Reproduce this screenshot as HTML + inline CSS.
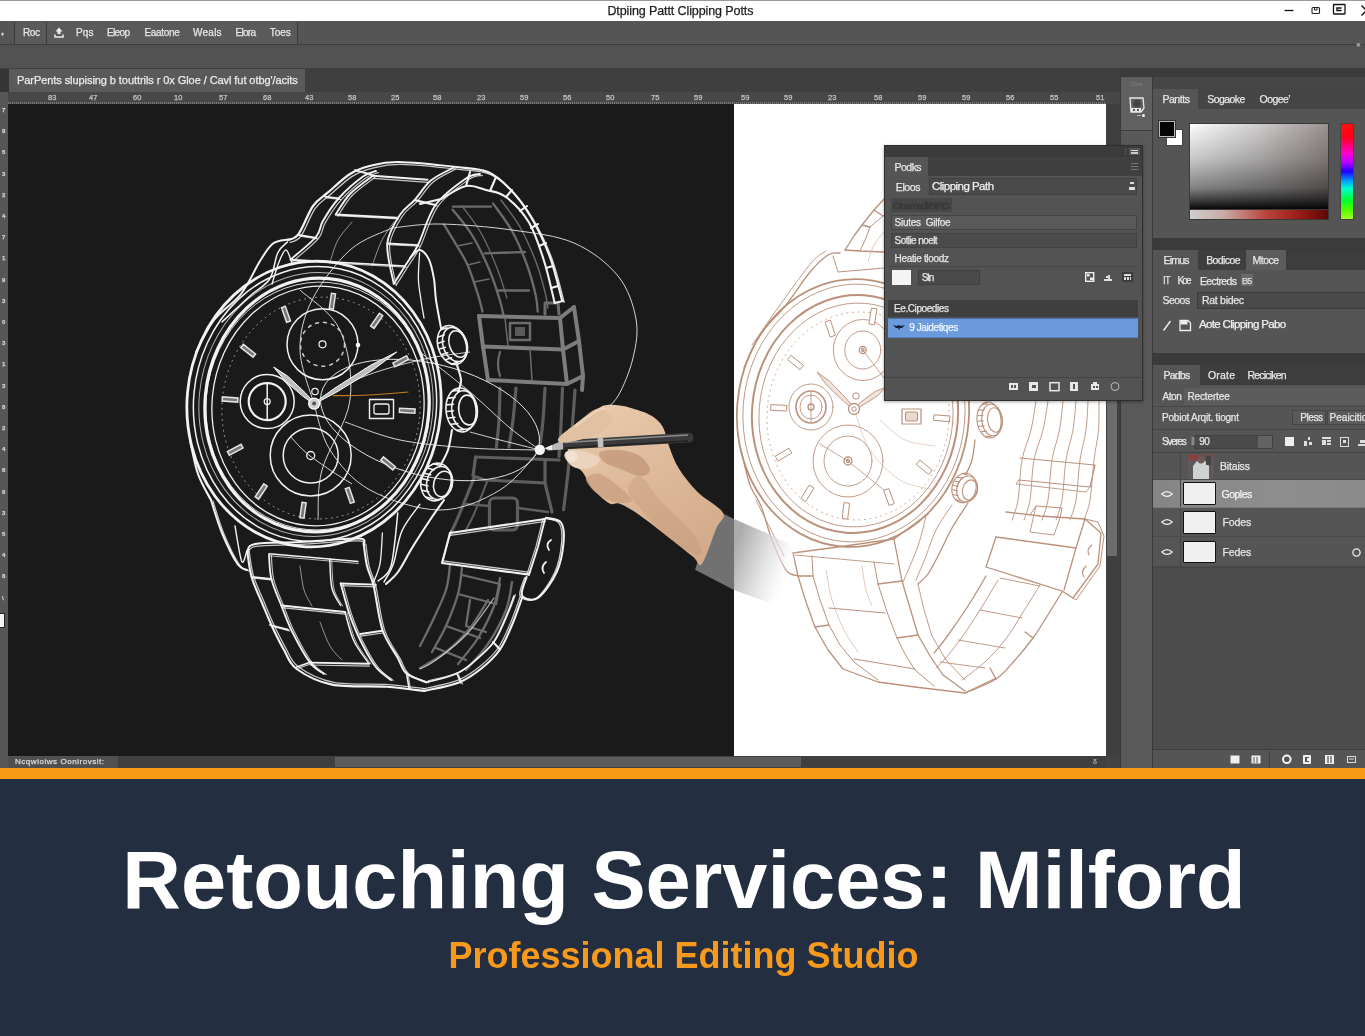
<!DOCTYPE html><html><head><meta charset="utf-8"><title>Retouching Services: Milford</title><style>
*{margin:0;padding:0;box-sizing:border-box}
html,body{width:1365px;height:1036px;overflow:hidden;background:#232e40}
body{font-family:"Liberation Sans",sans-serif;position:relative;will-change:transform}
.a{position:absolute}
.t{position:absolute;white-space:nowrap;color:#e6e6e6;font-size:10px;line-height:12px;letter-spacing:-0.2px;-webkit-text-stroke:0.25px currentColor}
#banner{position:absolute;left:0;top:779px;width:1365px;height:257px;background:#232e40}
#h1{position:absolute;left:0;width:1365px;text-align:center;top:830px;font-size:81.2px;line-height:100px;font-weight:bold;color:#fff;white-space:nowrap;padding-left:3px}
#h2{position:absolute;left:0;width:1365px;text-align:center;top:936.2px;font-size:36px;line-height:40px;font-weight:bold;color:#f7991c;white-space:nowrap;padding-left:2px}
</style></head><body>
<div class="a" style="left:0px;top:0px;width:1365px;height:21px;background:#fff;"></div>
<div class="a" style="left:0px;top:0px;width:1365px;height:1px;background:#9a9a9a;"></div>
<div class="t" style="left:607.4px;top:3.5px;font-size:12.5px;line-height:14.5px;letter-spacing:-0.10px;color:#1c1c1c">Dtpiing Pattt Clipping Potts</div>
<div class="a" style="left:0px;top:21px;width:1365px;height:24px;background:#555555;"></div>
<div class="a" style="left:14px;top:22px;width:284px;height:22px;background:#5a5a5a;border-left:1px solid #3a3a3a;border-right:1px solid #3a3a3a"></div>
<div class="a" style="left:46px;top:22px;width:1px;height:22px;background:#3a3a3a;"></div>
<div class="t" style="left:23px;top:27px;font-size:10px;line-height:12px;letter-spacing:-0.39px;">Roc</div>
<div class="t" style="left:76px;top:27px;font-size:10px;line-height:12px;letter-spacing:0.08px;">Pqs</div>
<div class="t" style="left:107px;top:27px;font-size:10px;line-height:12px;letter-spacing:-0.65px;">Eleop</div>
<div class="t" style="left:144.5px;top:27px;font-size:10px;line-height:12px;letter-spacing:-0.31px;">Eaatone</div>
<div class="t" style="left:193px;top:27px;font-size:10px;line-height:12px;letter-spacing:0.25px;">Weals</div>
<div class="t" style="left:235.4px;top:27px;font-size:10px;line-height:12px;letter-spacing:-0.66px;">Elora</div>
<div class="t" style="left:269.7px;top:27px;font-size:10px;line-height:12px;letter-spacing:-0.04px;">Toes</div>
<div class="a" style="left:0px;top:44px;width:1365px;height:1px;background:#3c3c3c;"></div>
<div class="a" style="left:0px;top:45px;width:1365px;height:23px;background:#525252;"></div>
<div class="a" style="left:0px;top:68px;width:1365px;height:24px;background:#3f3f3f;"></div>
<div class="a" style="left:9px;top:69px;width:296px;height:23px;background:#5a5a5a;"></div>
<div class="t" style="left:17px;top:74px;font-size:11px;line-height:13px;letter-spacing:-0.07px;color:#ececec">ParPents slupising b touttrils r 0x Gloe / Cavl fut otbg'/acits</div>
<div class="a" style="left:0px;top:92px;width:1120px;height:12px;background:#474747;"></div>
<div class="a" style="left:0px;top:92px;width:8px;height:676px;background:#565656;"></div>
<div class="a" style="left:8px;top:104px;width:726px;height:652px;background:#1a1a1a;"></div>
<div class="a" style="left:734px;top:104px;width:372px;height:652px;background:#fff;"></div>
<div class="a" style="left:1106px;top:104px;width:14px;height:664px;background:#434343;"></div>
<div class="a" style="left:8px;top:756px;width:1098px;height:12px;background:#404040;"></div>
<div class="a" style="left:8px;top:756px;width:110px;height:12px;background:#505050;"></div>
<div class="a" style="left:335px;top:757px;width:466px;height:10px;background:#5c5c5c;"></div>
<div class="t" style="left:48px;top:94px;font-size:7.5px;line-height:8px;color:#c4c4c4;letter-spacing:0">83</div>
<div class="t" style="left:89px;top:94px;font-size:7.5px;line-height:8px;color:#c4c4c4;letter-spacing:0">47</div>
<div class="t" style="left:133px;top:94px;font-size:7.5px;line-height:8px;color:#c4c4c4;letter-spacing:0">60</div>
<div class="t" style="left:174px;top:94px;font-size:7.5px;line-height:8px;color:#c4c4c4;letter-spacing:0">10</div>
<div class="t" style="left:219px;top:94px;font-size:7.5px;line-height:8px;color:#c4c4c4;letter-spacing:0">57</div>
<div class="t" style="left:263px;top:94px;font-size:7.5px;line-height:8px;color:#c4c4c4;letter-spacing:0">68</div>
<div class="t" style="left:305px;top:94px;font-size:7.5px;line-height:8px;color:#c4c4c4;letter-spacing:0">43</div>
<div class="t" style="left:348px;top:94px;font-size:7.5px;line-height:8px;color:#c4c4c4;letter-spacing:0">58</div>
<div class="t" style="left:391px;top:94px;font-size:7.5px;line-height:8px;color:#c4c4c4;letter-spacing:0">25</div>
<div class="t" style="left:433px;top:94px;font-size:7.5px;line-height:8px;color:#c4c4c4;letter-spacing:0">58</div>
<div class="t" style="left:477px;top:94px;font-size:7.5px;line-height:8px;color:#c4c4c4;letter-spacing:0">23</div>
<div class="t" style="left:520px;top:94px;font-size:7.5px;line-height:8px;color:#c4c4c4;letter-spacing:0">59</div>
<div class="t" style="left:563px;top:94px;font-size:7.5px;line-height:8px;color:#c4c4c4;letter-spacing:0">56</div>
<div class="t" style="left:606px;top:94px;font-size:7.5px;line-height:8px;color:#c4c4c4;letter-spacing:0">50</div>
<div class="t" style="left:651px;top:94px;font-size:7.5px;line-height:8px;color:#c4c4c4;letter-spacing:0">75</div>
<div class="t" style="left:694px;top:94px;font-size:7.5px;line-height:8px;color:#c4c4c4;letter-spacing:0">59</div>
<div class="t" style="left:741px;top:94px;font-size:7.5px;line-height:8px;color:#c4c4c4;letter-spacing:0">59</div>
<div class="t" style="left:784px;top:94px;font-size:7.5px;line-height:8px;color:#c4c4c4;letter-spacing:0">59</div>
<div class="t" style="left:828px;top:94px;font-size:7.5px;line-height:8px;color:#c4c4c4;letter-spacing:0">23</div>
<div class="t" style="left:874px;top:94px;font-size:7.5px;line-height:8px;color:#c4c4c4;letter-spacing:0">58</div>
<div class="t" style="left:918px;top:94px;font-size:7.5px;line-height:8px;color:#c4c4c4;letter-spacing:0">59</div>
<div class="t" style="left:962px;top:94px;font-size:7.5px;line-height:8px;color:#c4c4c4;letter-spacing:0">59</div>
<div class="t" style="left:1006px;top:94px;font-size:7.5px;line-height:8px;color:#c4c4c4;letter-spacing:0">56</div>
<div class="t" style="left:1050px;top:94px;font-size:7.5px;line-height:8px;color:#c4c4c4;letter-spacing:0">55</div>
<div class="t" style="left:1096px;top:94px;font-size:7.5px;line-height:8px;color:#c4c4c4;letter-spacing:0">51</div>
<div class="a" style="left:8px;top:102px;width:1098px;height:2px;background:repeating-linear-gradient(to right,#858585 0,#858585 1px,#474747 1px,#474747 2px);opacity:.8"></div>
<div class="t" style="left:2px;top:107.0px;font-size:6px;line-height:7px;color:#d0d0d0;font-weight:bold">7</div>
<div class="t" style="left:2px;top:128.2px;font-size:6px;line-height:7px;color:#d0d0d0;font-weight:bold">8</div>
<div class="t" style="left:2px;top:149.4px;font-size:6px;line-height:7px;color:#d0d0d0;font-weight:bold">5</div>
<div class="t" style="left:2px;top:170.6px;font-size:6px;line-height:7px;color:#d0d0d0;font-weight:bold">3</div>
<div class="t" style="left:2px;top:191.8px;font-size:6px;line-height:7px;color:#d0d0d0;font-weight:bold">2</div>
<div class="t" style="left:2px;top:213.0px;font-size:6px;line-height:7px;color:#d0d0d0;font-weight:bold">4</div>
<div class="t" style="left:2px;top:234.2px;font-size:6px;line-height:7px;color:#d0d0d0;font-weight:bold">7</div>
<div class="t" style="left:2px;top:255.4px;font-size:6px;line-height:7px;color:#d0d0d0;font-weight:bold">1</div>
<div class="t" style="left:2px;top:276.6px;font-size:6px;line-height:7px;color:#d0d0d0;font-weight:bold">9</div>
<div class="t" style="left:2px;top:297.79999999999995px;font-size:6px;line-height:7px;color:#d0d0d0;font-weight:bold">3</div>
<div class="t" style="left:2px;top:319.0px;font-size:6px;line-height:7px;color:#d0d0d0;font-weight:bold">0</div>
<div class="t" style="left:2px;top:340.2px;font-size:6px;line-height:7px;color:#d0d0d0;font-weight:bold">3</div>
<div class="t" style="left:2px;top:361.4px;font-size:6px;line-height:7px;color:#d0d0d0;font-weight:bold">1</div>
<div class="t" style="left:2px;top:382.59999999999997px;font-size:6px;line-height:7px;color:#d0d0d0;font-weight:bold">3</div>
<div class="t" style="left:2px;top:403.8px;font-size:6px;line-height:7px;color:#d0d0d0;font-weight:bold">8</div>
<div class="t" style="left:2px;top:425.0px;font-size:6px;line-height:7px;color:#d0d0d0;font-weight:bold">2</div>
<div class="t" style="left:2px;top:446.2px;font-size:6px;line-height:7px;color:#d0d0d0;font-weight:bold">4</div>
<div class="t" style="left:2px;top:467.4px;font-size:6px;line-height:7px;color:#d0d0d0;font-weight:bold">8</div>
<div class="t" style="left:2px;top:488.59999999999997px;font-size:6px;line-height:7px;color:#d0d0d0;font-weight:bold">6</div>
<div class="t" style="left:2px;top:509.8px;font-size:6px;line-height:7px;color:#d0d0d0;font-weight:bold">3</div>
<div class="t" style="left:2px;top:531.0px;font-size:6px;line-height:7px;color:#d0d0d0;font-weight:bold">5</div>
<div class="t" style="left:2px;top:552.2px;font-size:6px;line-height:7px;color:#d0d0d0;font-weight:bold">4</div>
<div class="t" style="left:2px;top:573.4px;font-size:6px;line-height:7px;color:#d0d0d0;font-weight:bold">8</div>
<div class="t" style="left:2px;top:594.5999999999999px;font-size:6px;line-height:7px;color:#d0d0d0;font-weight:bold">\</div>
<div class="a" style="left:0px;top:613px;width:5px;height:15px;background:#f4f4f4;border:1px solid #222;border-left:0"></div>
<div class="t" style="left:15px;top:757px;font-size:8px;line-height:10px;letter-spacing:0.54px;color:#dcdcdc">Ncqwioiws Oonirovsit:</div>
<div class="t" style="left:1093px;top:757px;font-size:7px;line-height:9px;color:#aaa">&#948;</div>
<svg class="a" style="left:1280px;top:2px" width="85" height="17" viewBox="0 0 85 17"><path d="M4.500 8.500h9" stroke="#111" stroke-width="1.300"/><rect x="32" y="5.500" width="7.500" height="6" rx="1" fill="none" stroke="#222" stroke-width="1.100"/><path d="M34.500 6v2h2.500v-2" fill="none" stroke="#222" stroke-width="1"/><rect x="53.500" y="2.500" width="11.500" height="9.500" rx="0.500" fill="none" stroke="#111" stroke-width="1.300"/><path d="M61.500 6h-4.500v2.500h4.500" fill="none" stroke="#111" stroke-width="1.400"/><path d="M81.500 3.500l5 5-5 5" fill="none" stroke="#111" stroke-width="1.400"/></svg>
<div class="t" style="left:1px;top:31px;font-size:6px;line-height:7px;color:#ccc">&#9830;</div>
<svg class="a" style="left:54px;top:27px" width="10" height="11" viewBox="0 0 10 11"><path d="M5 0.500L8.500 4.500H6.500V7H3.500V4.500H1.500Z" fill="#ececec"/><path d="M1 7.500V10H9V7.500" fill="none" stroke="#ececec" stroke-width="1.500"/></svg>
<div class="a" style="left:0px;top:69px;width:9px;height:23px;background:#353535;"></div>
<div class="a" style="left:1106px;top:104px;width:15px;height:652px;background:#3f3f3f;"></div>
<div class="a" style="left:1107px;top:395px;width:10px;height:161px;background:#6c6c6c;"></div>
<div class="a" style="left:1121px;top:68px;width:32px;height:700px;background:#595959;"></div>
<div class="a" style="left:1121px;top:78px;width:31px;height:52px;background:#606060;"></div>
<div class="a" style="left:1120px;top:68px;width:1px;height:700px;background:#3a3a3a;"></div>
<div class="a" style="left:1152px;top:77px;width:1px;height:691px;background:#3a3a3a;"></div>
<div class="a" style="left:1121px;top:130px;width:31px;height:1px;background:#3d3d3d;"></div>
<svg class="a" style="left:1127px;top:95px" width="22" height="24" viewBox="0 0 22 24"><path d="M3 3h13l1 10-3 4H4z" fill="none" stroke="#e8e8e8" stroke-width="1.300"/><circle cx="10" cy="8.500" r="3.800" fill="#444"/><rect x="4" y="13" width="10" height="4" fill="#e8e8e8"/><rect x="6" y="14" width="2" height="2" fill="#555"/><rect x="10" y="14" width="2" height="2" fill="#555"/><circle cx="16.500" cy="20.500" r="1.500" fill="#eee"/><path d="M10 20.500h4" stroke="#bbb" stroke-width="1"/></svg>
<div class="t" style="left:1131px;top:81px;font-size:6px;line-height:7px;color:#777">Cloe</div>
<div class="t" style="left:1146px;top:69px;font-size:9px;line-height:9px;color:#ddd;font-weight:bold">c</div>
<div class="t" style="left:1356px;top:41px;font-size:8px;line-height:8px;color:#999">&#9679;</div>
<div class="a" style="left:1153px;top:68px;width:212px;height:9px;background:#3b3b3b;"></div>
<div class="a" style="left:1121px;top:68px;width:244px;height:9px;background:#3b3b3b;"></div>
<div class="a" style="left:1153px;top:77px;width:212px;height:12px;background:#464646;"></div>
<div class="a" style="left:1153px;top:89px;width:212px;height:20px;background:#454545;"></div>
<div class="a" style="left:1153px;top:89px;width:45px;height:20px;background:#555;"></div>
<div class="t" style="left:1162.4px;top:93px;font-size:10.5px;line-height:12.5px;letter-spacing:-0.45px;">Pantts</div>
<div class="t" style="left:1207.3px;top:93px;font-size:10.5px;line-height:12.5px;letter-spacing:-0.58px;">Sogaoke</div>
<div class="t" style="left:1259.6px;top:93px;font-size:10.5px;line-height:12.5px;letter-spacing:-0.57px;">Oogee&#8217;</div>
<div class="a" style="left:1153px;top:109px;width:212px;height:129px;background:#555;"></div>
<div class="a" style="left:1166px;top:129px;width:17px;height:17px;background:#fff;border:1px solid #444"></div>
<div class="a" style="left:1159px;top:121px;width:16px;height:16px;background:#050505;border:1px solid #bbb;outline:1px solid #333"></div>
<div class="a" style="left:1189px;top:123px;width:140px;height:87px;background:linear-gradient(to bottom,rgba(0,0,0,0) 0%,rgba(0,0,0,.2) 40%,rgba(0,0,0,.48) 75%,rgba(0,0,0,.8) 92%,rgba(0,0,0,.97) 100%),linear-gradient(to right,#fdfdfd 0%,#cfcccc 50%,#9a9090 100%);border:1px solid #3a3a3a"></div>
<div class="a" style="left:1189px;top:210px;width:140px;height:10px;background:linear-gradient(to right,#cfcfcf 0%,#c9a9a4 25%,#b8453c 55%,#9a1a14 80%,#5e0805 100%);border:1px solid #3a3a3a;border-top:0"></div>
<div class="a" style="left:1340px;top:123px;width:14px;height:97px;background:linear-gradient(to bottom,#ff1010 0%,#ff0018 14%,#ff00c8 30%,#c000ff 40%,#2000ff 50%,#00a0ff 60%,#00ffd0 68%,#00ff30 80%,#50ff00 90%,#a0ff20 100%);border:1px solid #444"></div>
<div class="a" style="left:1153px;top:238px;width:212px;height:12px;background:#3b3b3b;"></div>
<div class="a" style="left:1153px;top:250px;width:212px;height:20px;background:#3d3d3d;"></div>
<div class="a" style="left:1153px;top:250px;width:45px;height:20px;background:#555;"></div>
<div class="t" style="left:1163.5px;top:254px;font-size:10.5px;line-height:12.5px;letter-spacing:-0.79px;">Eimus</div>
<div class="a" style="left:1199px;top:250px;width:46px;height:20px;background:#3f3f3f;"></div>
<div class="t" style="left:1206.2px;top:254px;font-size:10.5px;line-height:12.5px;letter-spacing:-0.61px;">Bodicoe</div>
<div class="a" style="left:1246px;top:250px;width:40px;height:20px;background:#5c5c5c;"></div>
<div class="t" style="left:1252.5px;top:254px;font-size:10.5px;line-height:12.5px;letter-spacing:-0.47px;">Mtoce</div>
<div class="a" style="left:1153px;top:270px;width:212px;height:83px;background:#555;"></div>
<div class="t" style="left:1163px;top:275px;font-size:10px;letter-spacing:-1px;color:#ddd">&#921;&#932;</div>
<div class="t" style="left:1177.6px;top:275px;font-size:10px;line-height:12px;letter-spacing:-1.90px;">Koe</div>
<div class="t" style="left:1200px;top:275px;font-size:10.5px;line-height:12.5px;letter-spacing:-0.63px;">Eectreds</div>
<div class="a" style="left:1241px;top:274px;width:12px;height:12px;background:#6a6a6a;"></div>
<div class="t" style="left:1242px;top:275px;font-size:9px;color:#ddd;letter-spacing:-0.8px">B5</div>
<div class="t" style="left:1162.4px;top:294px;font-size:10.5px;line-height:12.5px;letter-spacing:-0.49px;">Seoos</div>
<div class="a" style="left:1197px;top:292px;width:168px;height:17px;background:#4a4a4a;border:1px solid #3c3c3c;border-right:0"></div>
<div class="t" style="left:1202px;top:294px;font-size:10.5px;line-height:12.5px;letter-spacing:-0.29px;">Rat bidec</div>
<svg class="a" style="left:1162px;top:318px" width="30" height="14" viewBox="0 0 30 14"><path d="M1.5 12.5 L8.5 3" stroke="#f0f0f0" stroke-width="1.4" fill="none"/><path d="M18 2.5h8l2.5 2.5v7.5h-10.5z" fill="none" stroke="#eee" stroke-width="1.3"/><rect x="18.5" y="3" width="7" height="3.5" fill="#eee"/></svg>
<div class="t" style="left:1199px;top:318px;font-size:11.5px;line-height:13.5px;letter-spacing:-0.67px;color:#f0f0f0">Aote Clipping Pabo</div>
<div class="a" style="left:1153px;top:353px;width:212px;height:12px;background:#3b3b3b;"></div>
<div class="a" style="left:1153px;top:365px;width:212px;height:20px;background:#3d3d3d;"></div>
<div class="a" style="left:1153px;top:365px;width:47px;height:20px;background:#555;"></div>
<div class="t" style="left:1163.5px;top:369px;font-size:10.5px;line-height:12.5px;letter-spacing:-0.77px;">Padbs</div>
<div class="t" style="left:1208px;top:369px;font-size:10.5px;line-height:12.5px;letter-spacing:0.18px;">Orate</div>
<div class="t" style="left:1247.5px;top:369px;font-size:10.5px;line-height:12.5px;letter-spacing:-0.81px;">Reciciken</div>
<div class="a" style="left:1153px;top:385px;width:212px;height:68px;background:#555;"></div>
<div class="a" style="left:1184px;top:388px;width:181px;height:17px;background:#5c5c5c;"></div>
<div class="t" style="left:1162.4px;top:391px;font-size:10px;line-height:12px;letter-spacing:-0.36px;">Aton</div>
<div class="t" style="left:1187.4px;top:391px;font-size:10px;line-height:12px;letter-spacing:-0.12px;">Rectertee</div>
<div class="a" style="left:1153px;top:406px;width:212px;height:1px;background:#484848;"></div>
<div class="t" style="left:1162px;top:412px;font-size:10px;line-height:12px;letter-spacing:-0.22px;">Pobiot Arqit. tiognt</div>
<div class="a" style="left:1292px;top:410px;width:34px;height:15px;background:#5a5a5a;border:1px solid #444"></div>
<div class="t" style="left:1300.3px;top:412px;font-size:10px;line-height:12px;letter-spacing:-0.41px;">Pless</div>
<div class="a" style="left:1327px;top:410px;width:38px;height:15px;background:#5a5a5a;border:1px solid #444;border-right:0"></div>
<div class="t" style="left:1329.6px;top:412px;font-size:10px;line-height:12px;letter-spacing:-0.00px;">Peaicitidl</div>
<div class="a" style="left:1153px;top:429px;width:212px;height:1px;background:#464646;"></div>
<div class="t" style="left:1162px;top:436px;font-size:10px;line-height:12px;letter-spacing:-1.26px;">Sveres</div>
<div class="a" style="left:1194px;top:435px;width:79px;height:14px;background:#4a4a4a;border:1px solid #404040"></div>
<div class="a" style="left:1258px;top:436px;width:14px;height:12px;background:#636363;"></div>
<div class="t" style="left:1191px;top:436px;color:#999">&#8214;</div>
<div class="t" style="left:1199.3px;top:436px;font-size:10px;line-height:12px;letter-spacing:-0.72px;">90</div>
<div class="a" style="left:1285px;top:437px;width:9px;height:9px;background:#eee;"></div>
<svg class="a" style="left:1300px;top:435px" width="65" height="13" viewBox="0 0 65 13"><g fill="#ddd"><rect x="4" y="6" width="3" height="5"/><rect x="8" y="2" width="2" height="3"/><rect x="9" y="7" width="3" height="3"/><rect x="22" y="2" width="9" height="2"/><rect x="22" y="5" width="4" height="5"/><rect x="27" y="5" width="4" height="2"/><rect x="27" y="8" width="4" height="2"/></g><rect x="40.500" y="2.500" width="8" height="9" fill="none" stroke="#ddd"/><rect x="43" y="5" width="3" height="3" fill="#ddd"/><path d="M58 9h7v2h-7zM60 5h5v3h-5z" fill="#ddd"/></svg>
<div class="a" style="left:1153px;top:452px;width:212px;height:1px;background:#444;"></div>
<div class="a" style="left:1153px;top:453px;width:212px;height:27px;background:#555;"></div>
<div class="a" style="left:1180px;top:453px;width:1px;height:27px;background:#474747;"></div>
<div class="a" style="left:1153px;top:479px;width:212px;height:1px;background:#4a4a4a;"></div>
<div class="t" style="left:1219.9px;top:460px;font-size:10.5px;line-height:12.5px;letter-spacing:-0.15px;">Bitaiss</div>
<div class="a" style="left:1153px;top:480px;width:212px;height:28px;background:linear-gradient(to right,#858585,#8e8e8e 60%,#8a8a8a);"></div>
<div class="a" style="left:1180px;top:480px;width:1px;height:28px;background:#474747;"></div>
<div class="a" style="left:1153px;top:507px;width:212px;height:1px;background:#7a7a7a;"></div>
<svg class="a" style="left:1161px;top:490px" width="12" height="8" viewBox="0 0 15 10"><path d="M1 5 Q7.500 -1 14 5 Q7.500 11 1 5Z" fill="none" stroke="#f2f2f2" stroke-width="1.500"/></svg>
<div class="t" style="left:1221.5px;top:488px;font-size:10.5px;line-height:12.5px;letter-spacing:-0.51px;color:#f2f2f2">Goples</div>
<div class="a" style="left:1153px;top:508px;width:212px;height:29px;background:#555;"></div>
<div class="a" style="left:1180px;top:508px;width:1px;height:29px;background:#474747;"></div>
<div class="a" style="left:1153px;top:536px;width:212px;height:1px;background:#4a4a4a;"></div>
<svg class="a" style="left:1161px;top:518px" width="12" height="8" viewBox="0 0 15 10"><path d="M1 5 Q7.500 -1 14 5 Q7.500 11 1 5Z" fill="none" stroke="#f2f2f2" stroke-width="1.500"/></svg>
<div class="t" style="left:1222.4px;top:516px;font-size:10.5px;line-height:12.5px;letter-spacing:-0.05px;">Fodes</div>
<div class="a" style="left:1153px;top:537px;width:212px;height:30px;background:#555;"></div>
<div class="a" style="left:1180px;top:537px;width:1px;height:30px;background:#474747;"></div>
<div class="a" style="left:1153px;top:566px;width:212px;height:1px;background:#4a4a4a;"></div>
<svg class="a" style="left:1161px;top:548px" width="12" height="8" viewBox="0 0 15 10"><path d="M1 5 Q7.500 -1 14 5 Q7.500 11 1 5Z" fill="none" stroke="#f2f2f2" stroke-width="1.500"/></svg>
<div class="t" style="left:1222.4px;top:546px;font-size:10.5px;line-height:12.5px;letter-spacing:-0.05px;">Fedes</div>
<svg class="a" style="left:1188px;top:454px" width="26" height="25" viewBox="0 0 26 25"><rect width="26" height="25" fill="#5e5a5a"/><rect x="0" y="0" width="26" height="7" fill="#6e5050"/><rect x="2" y="1" width="7" height="5" fill="#8a4040"/><path d="M5 25V12l4-5h8l4 5v13z" fill="#cfd2d2"/><circle cx="13" cy="6" r="3.500" fill="#6a5a55"/><rect x="18" y="2" width="5" height="9" fill="#444"/></svg>
<div class="a" style="left:1183px;top:482px;width:33px;height:23px;background:#f0f0f0;border:1.500px solid #111;border-radius:1px"></div>
<div class="a" style="left:1183px;top:511px;width:33px;height:23px;background:#f0f0f0;border:1.500px solid #111;border-radius:1px"></div>
<div class="a" style="left:1183px;top:541px;width:33px;height:22px;background:#f0f0f0;border:1.500px solid #111;border-radius:1px"></div>
<svg class="a" style="left:1351px;top:547px" width="11" height="11"><circle cx="5.500" cy="5.500" r="3.600" fill="none" stroke="#eee" stroke-width="1.300"/></svg>
<div class="a" style="left:1153px;top:567px;width:212px;height:183px;background:#4c4c4c;"></div>
<div class="a" style="left:1153px;top:567px;width:212px;height:1px;background:#454545;"></div>
<div class="a" style="left:1153px;top:750px;width:212px;height:18px;background:#555;"></div>
<div class="a" style="left:1153px;top:749px;width:212px;height:1px;background:#3f3f3f;"></div>
<div class="a" style="left:1269px;top:751px;width:1px;height:17px;background:#3f3f3f;"></div>
<svg class="a" style="left:1228px;top:753px" width="137" height="13" viewBox="0 0 137 13"><rect x="2.500" y="2.500" width="9" height="8" fill="#eee"/><rect x="23.500" y="2.500" width="9" height="8" fill="#eee"/><path d="M26 4v6M29 4v6" stroke="#555" stroke-width="1"/><circle cx="58.800" cy="6.300" r="3.800" fill="none" stroke="#f4f4f4" stroke-width="2"/><path d="M76 3h6v7h-6z" fill="none" stroke="#f4f4f4" stroke-width="2" stroke-linejoin="round"/><rect x="79" y="5" width="3" height="3" fill="#f4f4f4"/><rect x="97" y="2" width="9" height="9" fill="#eee"/><path d="M100 3v7M103 3v7" stroke="#555" stroke-width="1.200"/><rect x="119.500" y="3.500" width="8" height="6" fill="none" stroke="#ddd" stroke-width="1"/><rect x="121" y="5" width="5" height="2" fill="#999"/></svg>
<svg class="a" style="left:8px;top:104px" width="1098" height="652" viewBox="8 104 1098 652">
<g fill="none" stroke="#bb917b" stroke-width="1.300" stroke-linejoin="round" stroke-linecap="round">
<ellipse cx="853" cy="413" rx="116" ry="134" transform="rotate(4.5 853 413)" stroke-width="1.800"/>
<ellipse cx="854" cy="413" rx="111" ry="129" transform="rotate(4.5 854 413)" stroke-width="0.900"/>
<ellipse cx="855" cy="414" rx="103" ry="119" transform="rotate(4.5 855 414)" stroke-width="2"/>
<ellipse cx="856" cy="415" rx="97" ry="112" transform="rotate(4.5 856 415)" stroke-width="0.900"/>
<ellipse cx="858" cy="416" rx="91" ry="104" transform="rotate(4.5 858 416)" stroke-width="0.800" stroke-dasharray="1 4.500" stroke="#bb917b"/>
<path d="M744.0 368.0 C746.7 362.5 753.0 345.5 760.0 335.0 C767.0 324.5 777.7 315.5 786.0 305.0 C794.3 294.5 803.0 280.3 810.0 272.0 C817.0 263.7 823.0 258.2 828.0 255.0 C833.0 251.8 838.0 253.3 840.0 253.0"/>
<path d="M752.0 345.0 C757.5 337.2 775.0 311.8 785.0 298.0 C795.0 284.2 805.2 269.8 812.0 262.0 C818.8 254.2 823.7 252.8 826.0 251.0" stroke-width="0.900"/>
<path d="M741.0 450.0 C742.5 455.8 746.7 475.7 750.0 485.0 C753.3 494.3 757.3 496.8 761.0 506.0 C764.7 515.2 767.8 529.3 772.0 540.0 C776.2 550.7 781.7 564.0 786.0 570.0 C790.3 576.0 796.0 575.0 798.0 576.0"/>
<path d="M756.0 500.0 C758.3 504.7 765.3 518.7 770.0 528.0 C774.7 537.3 781.7 551.3 784.0 556.0" stroke-width="0.900"/>
<path d="M845.0 250.0 L854.0 236.0 L862.0 225.0 L874.0 210.0 L885.0 198.0 L900.0 188.0"/>
<path d="M860.0 251.0 L866.0 238.0 L870.0 227.0 L883.0 216.0 L900.0 205.0" stroke-width="1"/>
<path d="M845.0 250.0 L860.0 251.0 L884.0 252.0"/><path d="M862.0 225.0 L870.0 227.0"/><path d="M874.0 210.0 L883.0 216.0"/>
<path d="M833.0 256.0 L838.0 272.0 L884.0 268.0" stroke-width="1"/>
<path d="M868.0 262.0 C869.0 259.2 871.3 250.0 874.0 245.0 C876.7 240.0 882.3 234.2 884.0 232.0" stroke-width="0.700" stroke="#d2b3a4"/>
<path d="M975.0 440.0 C974.5 443.3 973.5 454.3 972.0 460.0 C970.5 465.7 967.0 471.7 966.0 474.0"/>
<path d="M968.0 503.0 C965.3 507.2 956.7 519.8 952.0 528.0 C947.3 536.2 944.0 544.3 940.0 552.0 C936.0 559.7 931.7 568.7 928.0 574.0 C924.3 579.3 919.7 582.3 918.0 584.0"/>
<path d="M952.0 505.0 C949.3 509.2 940.3 521.5 936.0 530.0 C931.7 538.5 929.3 547.7 926.0 556.0 C922.7 564.3 917.7 576.0 916.0 580.0" stroke-width="0.900"/>
<path d="M926.0 516.0 C924.7 521.0 921.8 535.0 918.0 546.0 C914.2 557.0 905.5 576.0 903.0 582.0" stroke-width="0.900"/>
<g stroke-width="1.100">
<ellipse cx="989" cy="420" rx="12" ry="18" transform="rotate(-6 989 420)" /><ellipse cx="995" cy="420" rx="7.4399999999999995" ry="12.24" transform="rotate(-6 995 420)" /><ellipse cx="992.0" cy="420.0" rx="10.2" ry="15.84" transform="rotate(-6 992.0 420.0)" /><path d="M982.4 404.4L987.7 403.8"/><path d="M978.8 410.2L984.2 409.6"/><path d="M977.6 415.8L983.0 415.2"/><path d="M977.7 421.2L983.0 420.6"/><path d="M978.7 426.5L984.1 425.9"/><path d="M981.1 431.7L986.4 431.1"/><path d="M985.8 436.6L991.1 436.1"/>
<ellipse cx="964" cy="488" rx="12" ry="15" transform="rotate(14 964 488)" /><ellipse cx="970" cy="490" rx="7.4399999999999995" ry="10.200000000000001" transform="rotate(14 970 490)" /><ellipse cx="967.0" cy="489.0" rx="10.2" ry="13.2" transform="rotate(14 967.0 489.0)" /><path d="M962.4 473.7L967.7 475.0"/><path d="M957.3 477.1L962.6 478.4"/><path d="M954.5 481.0L959.8 482.3"/><path d="M952.9 485.2L958.2 486.5"/><path d="M952.4 489.7L957.6 491.0"/><path d="M953.0 494.5L958.2 495.8"/><path d="M955.9 499.9L961.2 501.2"/>
</g>
<path d="M793.0 553.0 L798.0 576.0 L806.0 602.0 L815.0 627.0 L828.0 650.0 L843.0 669.0 L878.0 682.0 L915.0 687.0 L965.0 693.0 L996.0 678.0"/>
<path d="M793.0 553.0 L845.0 546.0 L894.0 539.0 L928.0 514.0"/>
<path d="M795.0 555.0 L894.0 564.0" stroke-width="0.900"/>
<path d="M894.0 539.0 L898.0 560.0 L902.0 581.0 L910.0 608.0 L918.0 635.0 L930.0 656.0 L943.0 675.0 L965.0 691.0"/>
<path d="M874.0 562.0 L878.0 584.0 L887.0 612.0 L897.0 638.0 L906.0 656.0 L915.0 670.0 L934.0 686.0" stroke-width="1"/>
<path d="M812.0 556.0 L813.0 576.0 L820.0 600.0 L829.0 625.0 L840.0 645.0 L854.0 662.0 L878.0 680.0" stroke-width="1"/>
<path d="M829.0 608.0 L885.0 613.0" stroke-width="1"/><path d="M854.0 659.0 L915.0 669.0" stroke-width="1"/>
<path d="M798.0 576.0 L813.0 576.0"/><path d="M815.0 627.0 L829.0 625.0"/><path d="M878.0 584.0 L902.0 581.0"/><path d="M897.0 638.0 L918.0 635.0"/>
<path d="M918.0 584.0 L924.0 610.0 L932.0 636.0 L946.0 660.0 L965.0 680.0" stroke-width="0.900"/>
<path d="M826.0 570.0 C827.0 575.0 829.0 590.0 832.0 600.0 C835.0 610.0 839.7 621.3 844.0 630.0 C848.3 638.7 855.7 648.3 858.0 652.0" stroke-width="0.700" stroke="#d2b3a4"/>
<path d="M862.0 566.0 C862.7 570.0 864.3 583.3 866.0 590.0 C867.7 596.7 871.0 603.3 872.0 606.0" stroke-width="0.700" stroke="#d2b3a4"/>
<path d="M1036.0 401.0 C1035.2 405.8 1033.3 420.2 1031.0 430.0 C1028.7 439.8 1024.2 448.3 1022.0 460.0 C1019.8 471.7 1019.7 490.0 1018.0 500.0 C1016.3 510.0 1013.0 516.7 1012.0 520.0" stroke-width="0.900"/>
<path d="M1048.0 401.0 C1047.2 405.8 1045.3 420.2 1043.0 430.0 C1040.7 439.8 1036.2 448.3 1034.0 460.0 C1031.8 471.7 1031.7 490.0 1030.0 500.0 C1028.3 510.0 1025.0 516.7 1024.0 520.0" stroke-width="0.900"/>
<path d="M1063.0 401.0 C1062.4 405.8 1061.3 420.2 1059.5 430.0 C1057.7 439.8 1053.9 448.3 1052.0 460.0 C1050.1 471.7 1049.7 490.0 1048.0 500.0 C1046.3 510.0 1043.0 516.7 1042.0 520.0" stroke-width="0.900"/>
<path d="M1076.0 401.0 C1075.5 405.8 1074.7 420.2 1073.0 430.0 C1071.3 439.8 1067.8 448.3 1066.0 460.0 C1064.2 471.7 1063.7 490.0 1062.0 500.0 C1060.3 510.0 1057.0 516.7 1056.0 520.0" stroke-width="0.900"/>
<path d="M1088.0 401.0 C1087.7 405.8 1087.3 420.2 1086.0 430.0 C1084.7 439.8 1081.7 448.3 1080.0 460.0 C1078.3 471.7 1077.7 490.0 1076.0 500.0 C1074.3 510.0 1071.0 516.7 1070.0 520.0" stroke-width="0.900"/>
<path d="M1099.0 401.0 C1098.9 405.8 1099.3 420.2 1098.5 430.0 C1097.7 439.8 1095.4 448.3 1094.0 460.0 C1092.6 471.7 1091.7 490.0 1090.0 500.0 C1088.3 510.0 1085.0 516.7 1084.0 520.0" stroke-width="0.900"/>
<path d="M1020.0 458.0 L1095.0 465.0 L1090.0 487.0 L1019.0 480.0" stroke-width="1.200"/>
<path d="M1019.0 480.0 L1016.0 484.0 L1086.0 492.0 L1090.0 487.0" stroke-width="0.900"/>
<path d="M1006.0 512.0 L1040.0 516.0 L1085.0 519.0 L1101.0 533.0 L1098.0 564.0 L1073.0 598.0 L1062.0 591.0 L986.0 567.0 L996.0 537.0"/>
<path d="M996.0 537.0 L1076.0 548.0 L1085.0 519.0"/><path d="M1076.0 548.0 L1064.0 590.0"/>
<path d="M1030.0 515.0 L1036.0 506.0 L1062.0 508.0 L1060.0 518.0" stroke-width="1"/><path d="M1036.0 506.0 L1030.0 532.0 L1054.0 535.0 L1060.0 518.0" stroke-width="0.900"/>
<path d="M1092 545 q-6 4 -3 10 M1086 566 q-6 6 -2 11" stroke-width="1.100"/>
<path d="M1085.0 519.0 L1098.0 522.0 L1104.0 536.0 L1100.0 566.0 L1076.0 600.0 L1073.0 598.0" stroke-width="1"/>
<path d="M1062.0 592.0 C1059.3 596.3 1050.8 610.3 1046.0 618.0 C1041.2 625.7 1038.2 631.0 1033.0 638.0 C1027.8 645.0 1021.2 653.2 1015.0 660.0 C1008.8 666.8 1004.3 673.5 996.0 679.0 C987.7 684.5 970.2 690.7 965.0 693.0"/>
<path d="M1040.0 585.0 C1037.0 589.8 1027.8 604.8 1022.0 614.0 C1016.2 623.2 1011.2 632.0 1005.0 640.0 C998.8 648.0 992.2 655.3 985.0 662.0 C977.8 668.7 965.8 677.0 962.0 680.0" stroke-width="0.900"/>
<path d="M986.0 576.0 C983.0 581.0 974.7 595.7 968.0 606.0 C961.3 616.3 951.7 630.2 946.0 638.0 C940.3 645.8 936.0 650.5 934.0 653.0"/>
<path d="M998.0 580.0 C995.0 585.0 986.3 600.0 980.0 610.0 C973.7 620.0 966.0 631.7 960.0 640.0 C954.0 648.3 948.0 655.3 944.0 660.0 C940.0 664.7 937.3 666.7 936.0 668.0" stroke-width="0.900"/>
<path d="M1000.0 578.0 L1040.0 586.0" stroke-width="0.900"/><path d="M980.0 610.0 L1022.0 618.0" stroke-width="0.900"/><path d="M958.0 640.0 L1005.0 648.0" stroke-width="0.900"/><path d="M940.0 662.0 L985.0 668.0" stroke-width="0.900"/>
<path d="M1033.0 638.0 L1025.0 632.0"/><path d="M996.0 679.0 L990.0 668.0"/>
<g stroke-width="0.900">
<ellipse cx="862.8" cy="350" rx="29.5" ry="30.5" transform="rotate(0 862.8 350)" />
<ellipse cx="862.8" cy="350" rx="18" ry="19" transform="rotate(0 862.8 350)" />
<ellipse cx="811" cy="407" rx="22" ry="23" transform="rotate(0 811 407)" />
<ellipse cx="811" cy="407" rx="15" ry="16" transform="rotate(0 811 407)" stroke-width="1.600"/>
<ellipse cx="811" cy="407" rx="11" ry="12" transform="rotate(0 811 407)" />
<ellipse cx="848" cy="461" rx="35" ry="36" transform="rotate(0 848 461)" />
<ellipse cx="848" cy="461" rx="24" ry="25" transform="rotate(0 848 461)" />
<path d="M811 392v30"/>
</g>
<circle cx="862.800" cy="350" r="3.500"/><circle cx="862.800" cy="350" r="1.300"/><circle cx="811" cy="407" r="3"/><circle cx="848" cy="461" r="4"/><circle cx="848" cy="461" r="1.500"/>
<path d="M848.0 461.0 L884.0 490.0" stroke-width="0.800"/><path d="M848.0 461.0 L820.0 444.0" stroke-width="0.800"/><path d="M862.8 350.0 L884.0 378.0" stroke-width="0.800"/>
<rect x="902" y="409" width="19" height="15" stroke-width="1.200"/><rect x="905.500" y="412" width="12" height="9" rx="1.500" stroke-width="1.100" fill="#e9d9d0"/>
<path d="M854.0 409.0 C856.7 415.8 862.3 438.2 870.0 450.0 C877.7 461.8 889.2 473.3 900.0 480.0 C910.8 486.7 929.2 488.3 935.0 490.0" stroke-width="0.600" stroke="#d2b3a4"/>
<path d="M880.0 420.0 C884.2 423.3 895.8 435.7 905.0 440.0 C914.2 444.3 930.0 445.0 935.0 446.0" stroke-width="0.600" stroke="#d2b3a4"/>
</g>
<g stroke="#bb917b" stroke-width="1" fill="#fff">
<path d="M874.4 324.8 L877.0 309.0 L871.4 308.1 L868.9 323.9Z"/>
<path d="M911.3 342.7 L920.6 329.8 L916.1 326.5 L906.7 339.5Z"/>
<path d="M929.9 378.3 L944.2 371.1 L941.6 366.1 L927.4 373.3Z"/>
<path d="M933.6 420.4 L949.5 421.6 L949.9 416.0 L934.0 414.8Z"/>
<path d="M916.2 464.3 L928.5 474.5 L932.1 470.2 L919.8 460.0Z"/>
<path d="M883.6 490.5 L889.1 505.5 L894.3 503.5 L888.8 488.5Z"/>
<path d="M844.0 502.6 L842.2 518.5 L847.7 519.1 L849.6 503.2Z"/>
<path d="M809.2 485.1 L800.8 498.7 L805.6 501.7 L814.0 488.0Z"/>
<path d="M789.0 448.2 L775.2 456.2 L778.0 461.0 L791.8 453.0Z"/>
<path d="M786.9 405.4 L770.9 404.6 L770.6 410.2 L786.6 411.0Z"/>
<path d="M803.5 365.3 L790.9 355.4 L787.5 359.7 L800.0 369.7Z"/>
<path d="M835.4 335.3 L830.4 320.1 L825.1 321.9 L830.1 337.1Z"/>
</g>
<path d="M858.2 413.2L846.1 398.4L829.8 381.4L817.0 372.0L826.4 384.8L843.4 401.1Z" fill="#efe3dc" stroke="#bb917b" stroke-width="0.900"/>
<path d="M850.7 411.3L863.1 405.1L877.8 395.6L886.0 387.0L875.0 391.6L860.9 401.9Z" fill="#efe3dc" stroke="#bb917b" stroke-width="0.900"/>
<circle cx="854" cy="409" r="5.500" fill="#fff" stroke="#bb917b" stroke-width="1.300"/><circle cx="854" cy="409" r="2.200" fill="none" stroke="#bb917b" stroke-width="1"/>
<circle cx="856" cy="396" r="3.200" fill="none" stroke="#bb917b" stroke-width="1"/>
<g fill="none" stroke="#6c6c6c" stroke-width="2.3" stroke-linejoin="round" stroke-linecap="round">
<path d="M444.0 224.6 C446.2 228.2 453.1 239.3 457.0 246.0 C460.9 252.7 464.1 256.9 467.6 265.0 C471.1 273.1 475.5 286.9 478.0 294.7 C480.5 302.5 481.8 308.9 482.5 311.7"/>
<path d="M452.7 209.7 C455.9 213.9 465.9 225.1 472.0 235.0 C478.1 244.9 484.4 258.3 489.0 269.0 C493.6 279.7 497.1 291.2 499.5 299.0 C501.9 306.8 503.0 313.2 503.7 316.0"/>
<path d="M493.0 203.4 C496.2 208.0 506.3 220.7 512.0 231.0 C517.7 241.3 523.1 254.4 527.0 265.0 C530.9 275.6 533.8 286.9 535.6 294.7 C537.4 302.5 537.4 308.9 537.7 311.7"/>
<path d="M501.0 200.0 C504.2 204.5 514.2 216.7 520.0 227.0 C525.8 237.3 531.8 251.2 536.0 262.0 C540.2 272.8 543.0 284.3 545.0 292.0 C547.0 299.7 547.5 305.3 548.0 308.0" stroke-width="1.4"/>
<path d="M462.0 206.0 C465.2 210.5 475.2 222.7 481.0 233.0 C486.8 243.3 492.7 257.2 497.0 268.0 C501.3 278.8 505.3 293.0 507.0 298.0" stroke-width="1.3"/>
<path d="M452.700 206.600L491 206.600"/><path d="M484.600 253.300L525 252"/><path d="M498.400 290.500L529 290.500"/>
<path d="M457 246L472 243M467.600 265L480 262M474 282L489 279" stroke-width="1.600"/>
<g stroke="#7d7d7d" stroke-width="4" stroke-linejoin="round">
<path d="M479 316L560 318L574 307"/>
<path d="M483 346.500L563 349.500L579 341"/>
<path d="M488 380L567 384L583 376"/>
<path d="M479 316L483 346.500L488 380"/>
<path d="M560 318L563 349.500L567 384"/>
<path d="M574 307L579 341L583 376L582 390"/>
</g>
<path d="M510 323h20v17h-20z" stroke-width="2.500"/><rect x="515" y="327" width="10" height="9" fill="#5a5a5a" stroke="none"/>
<path d="M500 352q-4 12 0 24" stroke-width="2.200"/><path d="M545 314L545 303L558 303L559 314" stroke-width="3"/>
<path d="M505 318L508 346M530 349L532 380" stroke-width="1.500"/>
<g stroke="#5e5e5e" stroke-width="3.200">
<path d="M500.0 388.0 C499.8 393.3 499.6 410.2 499.0 420.0 C498.4 429.8 496.8 442.5 496.4 447.0"/>
<path d="M516.0 388.0 C515.5 393.3 514.2 410.2 513.0 420.0 C511.8 429.8 509.7 442.5 509.0 447.0"/>
<path d="M545.0 388.0 C544.7 393.3 543.8 410.9 543.0 420.0 C542.2 429.1 540.9 438.8 540.5 442.5"/>
<path d="M562.5 388.0 C562.2 394.2 561.6 413.6 561.0 425.0 C560.4 436.4 559.3 451.2 559.0 456.4"/>
<path d="M575.0 390.0 C574.5 396.7 573.2 416.2 572.0 430.0 C570.8 443.8 569.4 459.4 568.0 472.7 C566.6 486.0 564.3 503.5 563.6 509.7"/>
<path d="M475.600 457L559 460"/>
<path d="M475.6 457.0 L473.0 476.0 L485.0 480.0 L545.0 483.0"/>
<path d="M545.0 460.0 L545.0 483.0 L552.0 512.0"/>
<path d="M474.0 478.0 C471.6 484.0 463.4 504.5 459.4 514.0 C455.4 523.5 451.6 531.5 450.0 535.0"/>
<path d="M487.0 482.0 C484.8 487.3 477.5 506.0 474.0 514.0 C470.5 522.0 467.3 527.3 466.0 530.0" stroke-width="2"/>
<rect x="489.500" y="498" width="28" height="32" rx="5"/>
<path d="M518 508L548 512" stroke-width="2.400"/><path d="M466 504L489 506" stroke-width="2.400"/>
</g>
<path d="M450.0 565.0 C449.3 569.2 449.0 580.5 446.0 590.0 C443.0 599.5 436.3 612.7 432.0 622.0 C427.7 631.3 422.0 642.0 420.0 646.0"/>
<path d="M462.0 568.0 C461.3 572.3 460.7 584.3 458.0 594.0 C455.3 603.7 450.3 616.3 446.0 626.0 C441.7 635.7 434.3 647.7 432.0 652.0"/>
<path d="M500.0 578.0 C499.0 582.7 497.7 596.0 494.0 606.0 C490.3 616.0 484.0 628.3 478.0 638.0 C472.0 647.7 461.3 659.7 458.0 664.0"/>
<path d="M512.0 582.0 C511.0 586.7 510.0 599.7 506.0 610.0 C502.0 620.3 494.7 634.0 488.0 644.0 C481.3 654.0 469.7 665.7 466.0 670.0"/>
<path d="M458 594 L496 604"/><path d="M446 626 L480 638"/><path d="M436 648 L466 660"/>
<path d="M462 575 L500 584 L496 604"/><path d="M470 600 L466 626 L486 632"/>
<path d="M420.0 668.0 C424.3 665.3 437.7 658.7 446.0 652.0 C454.3 645.3 463.0 636.7 470.0 628.0 C477.0 619.3 485.0 604.7 488.0 600.0"/>
</g>
<g fill="none" stroke="#e6e6e6" stroke-width="0.9">
<path d="M392.0 228.0 C400.0 227.3 420.0 223.7 440.0 224.0 C460.0 224.3 489.7 226.8 512.0 230.0 C534.3 233.2 556.3 235.3 574.0 243.0 C591.7 250.7 607.7 263.3 618.0 276.0 C628.3 288.7 633.5 305.3 636.0 319.0 C638.5 332.7 636.0 345.2 633.0 358.0 C630.0 370.8 623.5 386.7 618.0 396.0 C612.5 405.3 603.0 411.0 600.0 414.0"/>
<path d="M392.0 228.0 C385.0 231.7 363.3 238.0 350.0 250.0 C336.7 262.0 320.3 283.3 312.0 300.0 C303.7 316.7 299.7 332.7 300.0 350.0 C300.3 367.3 311.7 395.0 314.0 404.0"/>
<ellipse cx="430" cy="420" rx="112" ry="56" transform="rotate(14 430 420)" />
<path d="M314.0 404.0 C321.7 399.7 342.3 385.3 360.0 378.0 C377.7 370.7 401.7 364.3 420.0 360.0 C438.3 355.7 461.7 353.3 470.0 352.0"/>
<path d="M420.0 352.0 C428.3 358.7 455.0 379.3 470.0 392.0 C485.0 404.7 498.3 418.3 510.0 428.0 C521.7 437.7 535.0 446.3 540.0 450.0"/>
<path d="M314.0 404.0 C316.7 411.7 320.7 435.7 330.0 450.0 C339.3 464.3 351.7 480.0 370.0 490.0 C388.3 500.0 418.3 510.0 440.0 510.0 C461.7 510.0 483.3 500.0 500.0 490.0 C516.7 480.0 533.3 456.7 540.0 450.0"/>
<path d="M300.0 290.0 C306.7 296.7 331.7 311.7 340.0 330.0 C348.3 348.3 353.0 376.7 350.0 400.0 C347.0 423.3 327.3 450.0 322.0 470.0 C316.7 490.0 318.7 511.7 318.0 520.0"/>
<path d="M345.0 422.0 C354.2 425.0 379.2 435.7 400.0 440.0 C420.8 444.3 446.7 446.3 470.0 448.0 C493.3 449.7 528.3 449.7 540.0 450.0"/>
<path d="M470.0 432.0 C475.0 433.3 488.3 437.0 500.0 440.0 C511.7 443.0 533.3 448.3 540.0 450.0"/>
<ellipse cx="318" cy="406" rx="112" ry="124" transform="rotate(5 318 406)" />
<path d="M310.0 456.0 C313.3 458.3 323.0 465.3 330.0 470.0 C337.0 474.7 348.3 481.7 352.0 484.0"/>
<path d="M290.0 436.0 C291.7 437.8 296.7 443.7 300.0 447.0 C303.3 450.3 308.3 454.5 310.0 456.0"/>
</g>
<g fill="none" stroke="#f2f2f2" stroke-width="2.1" stroke-linejoin="round" stroke-linecap="round">
<ellipse cx="314" cy="404" rx="127" ry="143" transform="rotate(5.4 314 404)" stroke-width="2.8"/>
<ellipse cx="315" cy="404" rx="121.5" ry="137.5" transform="rotate(5.4 315 404)" stroke-width="1.5"/>
<ellipse cx="316" cy="404.5" rx="117" ry="132" transform="rotate(5.4 316 404.5)" stroke-width="1" opacity="0.7"/>
<ellipse cx="317" cy="405" rx="112" ry="127" transform="rotate(5.4 317 405)" stroke-width="3.2"/>
<ellipse cx="318" cy="406" rx="106" ry="120" transform="rotate(5.4 318 406)" stroke-width="1.3"/>
<ellipse cx="321" cy="408" rx="99" ry="111" transform="rotate(5.4 321 408)" stroke-width="0.8" stroke-dasharray="1 4.5" stroke="#bbb"/>
<path d="M196.0 352.0 C199.0 346.7 206.5 329.7 214.0 320.0 C221.5 310.3 233.3 303.8 241.0 294.0 C248.7 284.2 254.7 269.4 260.0 261.0 C265.3 252.6 268.3 247.1 273.0 243.5 C277.7 239.9 285.5 240.2 288.0 239.5" stroke-width="2"/>
<path d="M222.0 322.0 C226.7 317.7 242.1 303.2 250.0 296.0 C257.9 288.8 265.1 286.2 269.7 279.0 C274.3 271.8 274.8 259.2 277.7 253.0 C280.6 246.8 285.8 243.8 287.4 242.0" stroke-width="1.5"/>
<path d="M272.0 284.0 C273.2 280.3 276.7 267.7 279.0 262.0 C281.3 256.3 283.8 249.8 286.0 250.0 C288.2 250.2 291.0 260.8 292.0 263.0" stroke-width="1.4"/>
<path d="M190.0 440.0 C191.3 445.7 194.5 464.0 198.0 474.0 C201.5 484.0 208.8 495.7 211.0 500.0"/>
<path d="M410.0 258.0 C411.6 256.7 416.4 249.7 419.6 250.0 C422.8 250.3 426.6 254.8 429.0 259.6 C431.4 264.4 432.8 272.3 434.0 279.0 C435.2 285.7 434.8 291.8 436.0 300.0 C437.2 308.2 440.2 323.3 441.0 328.0" stroke-width="2"/>
<path d="M419.6 253.0 C419.4 257.3 418.2 271.2 418.4 279.0 C418.6 286.8 420.1 293.5 421.0 300.0 C421.9 306.5 423.5 315.0 424.0 318.0" stroke-width="1.3"/>
<path d="M456.0 362.0 C456.8 365.0 460.7 375.0 461.0 380.0 C461.3 385.0 458.5 390.0 458.0 392.0"/>
<path d="M452.0 430.0 C451.3 433.3 450.0 444.0 448.0 450.0 C446.0 456.0 441.3 463.3 440.0 466.0"/>
<path d="M444.0 500.0 C441.7 503.3 435.3 512.0 430.0 520.0 C424.7 528.0 417.3 539.3 412.0 548.0 C406.7 556.7 402.3 566.0 398.0 572.0 C393.7 578.0 388.0 582.0 386.0 584.0"/>
<path d="M419.8 504.4 C416.8 508.8 406.4 520.9 402.0 530.8 C397.6 540.7 396.4 555.2 393.4 563.7 C390.4 572.2 385.6 579.0 384.0 582.0" stroke-width="1.5"/>
<path d="M397.8 513.0 C396.7 521.8 394.3 554.7 391.0 566.0 C387.7 577.3 380.2 578.5 378.0 581.0" stroke-width="1.5"/>
<path d="M382.4 533.0 C382.0 538.1 381.5 555.5 380.0 563.7 C378.5 571.9 374.7 579.0 373.6 582.0" stroke-width="1.3"/>
<g stroke-width="1.6">
<ellipse cx="452" cy="345" rx="14" ry="20" transform="rotate(-18 452 345)" /><ellipse cx="458" cy="344" rx="8.68" ry="13.600000000000001" transform="rotate(-18 458 344)" /><ellipse cx="455.0" cy="344.5" rx="11.9" ry="17.6" transform="rotate(-18 455.0 344.5)" /><path d="M440.9 329.7L446.9 327.7"/><path d="M438.2 336.9L444.2 334.9"/><path d="M438.1 343.2L444.1 341.3"/><path d="M439.4 349.1L445.3 347.2"/><path d="M441.8 354.6L447.8 352.7"/><path d="M445.6 359.7L451.6 357.8"/><path d="M452.0 363.9L458.0 362.0"/>
<ellipse cx="461" cy="410" rx="15" ry="22" transform="rotate(-6 461 410)" /><ellipse cx="468" cy="410" rx="9.3" ry="14.96" transform="rotate(-6 468 410)" /><ellipse cx="464.5" cy="410.0" rx="12.75" ry="19.36" transform="rotate(-6 464.5 410.0)" /><path d="M452.8 391.0L459.5 390.3"/><path d="M448.3 398.1L455.0 397.4"/><path d="M446.8 404.9L453.5 404.2"/><path d="M446.8 411.5L453.5 410.8"/><path d="M448.2 418.0L454.9 417.3"/><path d="M451.0 424.3L457.8 423.6"/><path d="M456.9 430.3L463.6 429.6"/>
<ellipse cx="436" cy="482" rx="15" ry="19" transform="rotate(14 436 482)" /><ellipse cx="443" cy="484" rx="9.3" ry="12.920000000000002" transform="rotate(14 443 484)" /><ellipse cx="439.5" cy="483.0" rx="12.75" ry="16.72" transform="rotate(14 439.5 483.0)" /><path d="M434.1 463.9L440.7 465.5"/><path d="M427.7 468.2L434.2 469.8"/><path d="M424.2 473.2L430.7 474.8"/><path d="M422.2 478.6L428.7 480.2"/><path d="M421.4 484.2L428.0 485.9"/><path d="M422.2 490.3L428.7 491.9"/><path d="M425.8 497.1L432.4 498.7"/>
</g>
<path d="M288.0 240.0 C289.8 239.0 294.5 239.5 298.7 233.8 C302.9 228.1 308.2 212.8 313.0 206.0 C317.8 199.2 321.5 198.0 327.7 192.7 C333.9 187.4 343.0 178.4 350.0 174.0 C357.0 169.6 361.5 168.0 369.6 166.0 C377.7 164.0 384.1 161.8 398.6 162.0 C413.1 162.2 441.7 165.3 456.6 167.0 C471.5 168.7 479.1 168.3 488.0 172.0 C496.9 175.7 502.8 181.5 510.0 189.0 C517.2 196.5 524.3 205.7 531.0 217.0 C537.7 228.3 544.8 243.2 550.0 257.0 C555.2 270.8 560.0 292.8 562.0 300.0" stroke-width="2.2"/>
<path d="M288.0 240.0 C289.8 239.0 294.5 239.5 298.7 233.8 C302.9 228.1 308.2 212.8 313.0 206.0 C317.8 199.2 321.5 198.0 327.7 192.7 C333.9 187.4 343.0 178.4 350.0 174.0 C357.0 169.6 361.5 168.0 369.6 166.0 C377.7 164.0 384.1 161.8 398.6 162.0 C413.1 162.2 441.7 165.3 456.6 167.0 C471.5 168.7 479.1 168.3 488.0 172.0 C496.9 175.7 502.8 181.5 510.0 189.0 C517.2 196.5 524.3 205.7 531.0 217.0 C537.7 228.3 544.8 243.2 550.0 257.0 C555.2 270.8 560.0 292.8 562.0 300.0" stroke-width="1.36" opacity="0.8" transform="translate(2.2 2.4)"/>
<path d="M290.6 259.6 C294.8 255.8 310.6 243.4 316.0 237.0 C321.4 230.6 319.1 227.5 322.9 221.0 C326.7 214.5 332.3 205.4 339.0 198.0 C345.7 190.6 356.8 181.1 363.0 176.6 C369.2 172.1 373.8 171.9 376.0 171.0" stroke-width="1.9"/>
<path d="M290.6 259.6 C294.8 255.8 310.6 243.4 316.0 237.0 C321.4 230.6 319.1 227.5 322.9 221.0 C326.7 214.5 332.3 205.4 339.0 198.0 C345.7 190.6 356.8 181.1 363.0 176.6 C369.2 172.1 373.8 171.9 376.0 171.0" stroke-width="1.18" opacity="0.8" transform="translate(2.4 1.6)"/>
<path d="M298.7 235.0 L316.4 237.8" stroke-width="1.8"/>
<path d="M298.7 235.0 L316.4 237.8" stroke-width="1.12" opacity="0.8" transform="translate(1.6 1.2)"/>
<path d="M325.0 196.7 L339.0 198.3" stroke-width="1.8"/>
<path d="M325.0 196.7 L339.0 198.3" stroke-width="1.12" opacity="0.8" transform="translate(1.6 1.2)"/>
<path d="M355.0 170.0 L372.0 174.5" stroke-width="1.8"/>
<path d="M355.0 170.0 L372.0 174.5" stroke-width="1.12" opacity="0.8" transform="translate(1.6 1.2)"/>
<path d="M335.7 214.5 C338.1 211.1 343.8 200.4 350.0 194.0 C356.2 187.6 369.0 178.8 372.8 175.8" stroke-width="1.8"/>
<path d="M335.7 214.5 C338.1 211.1 343.8 200.4 350.0 194.0 C356.2 187.6 369.0 178.8 372.8 175.8" stroke-width="1.12" opacity="0.8" transform="translate(2.2 1.5)"/>
<path d="M372.8 175.8 L427.6 179.8" stroke-width="1.9"/>
<path d="M372.8 175.8 L427.6 179.8" stroke-width="1.18" opacity="0.8" transform="translate(0.5 2.6)"/>
<path d="M335.7 214.5 L397.0 217.7" stroke-width="1.9"/>
<path d="M335.7 214.5 L397.0 217.7" stroke-width="1.18" opacity="0.8" transform="translate(1.6 1.2)"/>
<path d="M290.6 259.6 L405.0 266.0" stroke-width="1.7"/>
<path d="M290.6 259.6 L405.0 266.0" stroke-width="1.05" opacity="0.8" transform="translate(1.6 1.2)"/>
<path d="M393.8 283.8 C392.7 277.1 386.2 255.1 387.3 243.5 C388.4 231.9 395.6 221.8 400.2 214.5 C404.8 207.2 409.6 205.7 414.7 200.0 C419.8 194.3 424.4 186.0 430.8 180.6 C437.2 175.2 449.6 169.8 453.4 167.7" stroke-width="1.9"/>
<path d="M393.8 283.8 C392.7 277.1 386.2 255.1 387.3 243.5 C388.4 231.9 395.6 221.8 400.2 214.5 C404.8 207.2 409.6 205.7 414.7 200.0 C419.8 194.3 424.4 186.0 430.8 180.6 C437.2 175.2 449.6 169.8 453.4 167.7" stroke-width="1.18" opacity="0.8" transform="translate(2.4 1.4)"/>
<path d="M393.8 283.8 C395.7 280.8 401.0 272.5 405.0 266.0 C409.0 259.5 412.9 255.2 418.0 245.0 C423.1 234.8 427.6 215.9 435.7 204.8 C443.8 193.7 458.9 183.3 466.3 178.2 C473.7 173.1 477.7 174.7 480.0 174.0" stroke-width="1.9"/>
<path d="M393.8 283.8 C395.7 280.8 401.0 272.5 405.0 266.0 C409.0 259.5 412.9 255.2 418.0 245.0 C423.1 234.8 427.6 215.9 435.7 204.8 C443.8 193.7 458.9 183.3 466.3 178.2 C473.7 173.1 477.7 174.7 480.0 174.0" stroke-width="1.18" opacity="0.8" transform="translate(2.4 1.4)"/>
<path d="M387.3 243.5 L418.0 245.1" stroke-width="1.8"/>
<path d="M387.3 243.5 L418.0 245.1" stroke-width="1.12" opacity="0.8" transform="translate(1.6 1.2)"/>
<path d="M414.7 200.0 L435.7 204.8" stroke-width="1.8"/>
<path d="M414.7 200.0 L435.7 204.8" stroke-width="1.12" opacity="0.8" transform="translate(1.6 1.2)"/>
<path d="M330.0 262.0 C331.3 258.3 334.3 246.7 338.0 240.0 C341.7 233.3 349.7 225.0 352.0 222.0" stroke-width="0.8" opacity="0.7"/>
<path d="M372.0 266.0 C373.7 261.7 378.3 247.3 382.0 240.0 C385.7 232.7 392.0 225.0 394.0 222.0" stroke-width="0.8" opacity="0.7"/>
<path d="M441.0 199.0 C445.2 196.8 458.5 187.5 466.0 186.0 C473.5 184.5 479.3 188.2 486.0 190.0 C492.7 191.8 498.8 191.6 506.0 197.0 C513.2 202.4 522.7 211.9 529.0 222.5 C535.3 233.1 539.7 247.3 544.0 260.7 C548.3 274.1 552.9 295.9 554.7 303.0"/>
<path d="M466.0 186.0 L470.0 172.0"/><path d="M490.0 191.0 L496.0 177.0"/><path d="M506.0 197.0 L512.0 190.0"/><path d="M520.0 211.0 L527.0 206.0"/><path d="M531.0 228.0 L538.0 224.0"/><path d="M539.0 246.0 L546.0 243.0"/><path d="M546.0 268.0 L553.0 266.0"/><path d="M551.0 288.0 L558.0 286.0"/><path d="M554.7 303.0 L563.0 301.0"/>
<path d="M420.0 204.0 L441.0 199.0"/>
<path d="M211.0 500.0 C212.8 505.5 217.6 522.4 222.0 533.0 C226.4 543.6 233.2 557.5 237.4 563.7 C241.6 569.9 245.4 569.0 247.0 570.0" stroke-width="2.0"/>
<path d="M211.0 500.0 C212.8 505.5 217.6 522.4 222.0 533.0 C226.4 543.6 233.2 557.5 237.4 563.7 C241.6 569.9 245.4 569.0 247.0 570.0" stroke-width="1.24" opacity="0.8" transform="translate(2 1)"/>
<path d="M235.0 526.0 C236.1 531.9 239.8 557.4 241.8 561.5 C243.8 565.6 246.1 552.3 247.0 550.5" stroke-width="1.4"/>
<path d="M247.3 551.6 C248.6 550.3 246.2 545.6 255.0 544.0 C263.8 542.4 282.8 542.9 300.0 542.0 C317.2 541.1 347.4 538.2 358.0 538.5 C368.6 538.8 362.8 543.1 363.7 544.0" stroke-width="2.0"/>
<path d="M247.3 551.6 C248.6 550.3 246.2 545.6 255.0 544.0 C263.8 542.4 282.8 542.9 300.0 542.0 C317.2 541.1 347.4 538.2 358.0 538.5 C368.6 538.8 362.8 543.1 363.7 544.0" stroke-width="1.24" opacity="0.8" transform="translate(0.5 2.4)"/>
<path d="M269.0 553.8 L358.0 561.5" stroke-width="1.5"/>
<path d="M269.0 553.8 L358.0 561.5" stroke-width="0.93" opacity="0.8" transform="translate(0.4 2)"/>
<path d="M247.3 551.6 C248.0 555.8 249.2 568.4 251.6 577.0 C254.0 585.6 258.5 594.6 262.0 603.0 C265.5 611.4 268.8 619.7 272.5 627.5 C276.2 635.3 280.0 643.1 284.0 650.0 C288.0 656.9 288.7 663.2 296.7 669.0 C304.7 674.8 317.0 681.6 332.0 684.6 C347.0 687.6 371.5 685.7 386.8 686.8 C402.1 687.9 417.8 690.3 424.0 691.0" stroke-width="2.1"/>
<path d="M247.3 551.6 C248.0 555.8 249.2 568.4 251.6 577.0 C254.0 585.6 258.5 594.6 262.0 603.0 C265.5 611.4 268.8 619.7 272.5 627.5 C276.2 635.3 280.0 643.1 284.0 650.0 C288.0 656.9 288.7 663.2 296.7 669.0 C304.7 674.8 317.0 681.6 332.0 684.6 C347.0 687.6 371.5 685.7 386.8 686.8 C402.1 687.9 417.8 690.3 424.0 691.0" stroke-width="1.30" opacity="0.8" transform="translate(1.6 -2.2)"/>
<path d="M269.0 555.0 C269.4 559.0 269.3 570.6 271.4 579.0 C273.4 587.4 277.8 596.7 281.3 605.5 C284.8 614.3 287.5 622.5 292.3 632.0 C297.1 641.5 304.7 655.6 310.0 662.6 C315.3 669.6 321.7 672.1 324.0 674.0" stroke-width="1.8"/>
<path d="M269.0 555.0 C269.4 559.0 269.3 570.6 271.4 579.0 C273.4 587.4 277.8 596.7 281.3 605.5 C284.8 614.3 287.5 622.5 292.3 632.0 C297.1 641.5 304.7 655.6 310.0 662.6 C315.3 669.6 321.7 672.1 324.0 674.0" stroke-width="1.12" opacity="0.8" transform="translate(2.4 0.6)"/>
<path d="M251.6 577.0 L271.4 579.0" stroke-width="1.8"/>
<path d="M251.6 577.0 L271.4 579.0" stroke-width="1.12" opacity="0.8" transform="translate(1.6 1.2)"/>
<path d="M270.0 625.0 L288.0 629.7" stroke-width="1.8"/>
<path d="M270.0 625.0 L288.0 629.7" stroke-width="1.12" opacity="0.8" transform="translate(1.6 1.2)"/>
<path d="M296.7 667.0 L311.0 662.0" stroke-width="1.8"/>
<path d="M296.7 667.0 L311.0 662.0" stroke-width="1.12" opacity="0.8" transform="translate(1.6 1.2)"/>
<path d="M329.7 559.0 C330.1 563.8 330.1 580.2 331.9 588.0 C333.7 595.8 339.2 602.6 340.7 605.5" stroke-width="1.5"/>
<path d="M329.7 559.0 C330.1 563.8 330.1 580.2 331.9 588.0 C333.7 595.8 339.2 602.6 340.7 605.5" stroke-width="0.93" opacity="0.8" transform="translate(2 0.5)"/>
<path d="M281.3 605.5 L345.0 612.0" stroke-width="1.9"/>
<path d="M281.3 605.5 L345.0 612.0" stroke-width="1.18" opacity="0.8" transform="translate(0.4 2.2)"/>
<path d="M345.0 612.0 C346.5 616.8 349.8 632.1 353.8 640.7 C357.8 649.3 366.5 659.9 369.0 663.7" stroke-width="1.5"/>
<path d="M345.0 612.0 C346.5 616.8 349.8 632.1 353.8 640.7 C357.8 649.3 366.5 659.9 369.0 663.7" stroke-width="0.93" opacity="0.8" transform="translate(2 0.5)"/>
<path d="M310.0 662.6 L369.0 663.7" stroke-width="1.9"/>
<path d="M310.0 662.6 L369.0 663.7" stroke-width="1.18" opacity="0.8" transform="translate(0.4 2.4)"/>
<path d="M340.7 583.5 C342.2 588.6 346.2 604.8 349.5 614.3 C352.8 623.8 356.0 631.9 360.4 640.7 C364.8 649.5 370.7 660.5 375.8 667.0 C380.9 673.5 388.5 677.8 391.0 680.0" stroke-width="1.9"/>
<path d="M340.7 583.5 C342.2 588.6 346.2 604.8 349.5 614.3 C352.8 623.8 356.0 631.9 360.4 640.7 C364.8 649.5 370.7 660.5 375.8 667.0 C380.9 673.5 388.5 677.8 391.0 680.0" stroke-width="1.18" opacity="0.8" transform="translate(2.2 0.4)"/>
<path d="M363.7 544.0 C364.2 547.7 365.4 559.0 367.0 566.0 C368.6 573.0 371.0 575.1 373.6 585.7 C376.2 596.3 378.4 617.7 382.4 629.7 C386.4 641.8 393.8 650.7 397.8 658.0 C401.8 665.3 401.8 669.5 406.6 673.6 C411.4 677.7 423.1 680.9 426.4 682.4" stroke-width="2.0"/>
<path d="M363.7 544.0 C364.2 547.7 365.4 559.0 367.0 566.0 C368.6 573.0 371.0 575.1 373.6 585.7 C376.2 596.3 378.4 617.7 382.4 629.7 C386.4 641.8 393.8 650.7 397.8 658.0 C401.8 665.3 401.8 669.5 406.6 673.6 C411.4 677.7 423.1 680.9 426.4 682.4" stroke-width="1.24" opacity="0.8" transform="translate(2.2 0.4)"/>
<path d="M340.7 583.5 L375.8 584.6" stroke-width="1.9"/>
<path d="M340.7 583.5 L375.8 584.6" stroke-width="1.18" opacity="0.8" transform="translate(0.3 2.2)"/>
<path d="M360.4 634.0 L382.4 630.8" stroke-width="1.9"/>
<path d="M360.4 634.0 L382.4 630.8" stroke-width="1.18" opacity="0.8" transform="translate(0.3 2.2)"/>
<path d="M406.6 673.6 L409.0 688.0" stroke-width="1.6"/>
<path d="M406.6 673.6 L409.0 688.0" stroke-width="0.99" opacity="0.8" transform="translate(1.6 1.2)"/>
<path d="M457.0 673.6 L461.0 683.0" stroke-width="1.6"/>
<path d="M457.0 673.6 L461.0 683.0" stroke-width="0.99" opacity="0.8" transform="translate(1.6 1.2)"/>
<path d="M426.4 682.4 C431.5 680.9 448.4 677.7 457.0 673.6 C465.6 669.5 471.8 663.5 478.0 658.0 C484.2 652.5 489.5 648.4 494.5 640.7 C499.5 633.0 504.8 619.5 508.0 612.0 C511.2 604.5 513.0 598.7 514.0 596.0" stroke-width="1.7"/>
<path d="M426.4 682.4 C431.5 680.9 448.4 677.7 457.0 673.6 C465.6 669.5 471.8 663.5 478.0 658.0 C484.2 652.5 489.5 648.4 494.5 640.7 C499.5 633.0 504.8 619.5 508.0 612.0 C511.2 604.5 513.0 598.7 514.0 596.0" stroke-width="1.05" opacity="0.8" transform="translate(1.5 -1.5)"/>
<path d="M300.0 566.0 C300.7 570.0 302.0 583.3 304.0 590.0 C306.0 596.7 310.7 603.3 312.0 606.0" stroke-width="0.8" opacity="0.7"/>
<path d="M320.0 622.0 C321.7 626.0 326.3 639.7 330.0 646.0 C333.7 652.3 340.0 657.7 342.0 660.0" stroke-width="0.8" opacity="0.7"/>
<path d="M450.0 533.0 L545.0 519.0" stroke-width="2.1"/>
<path d="M450.0 533.0 L545.0 519.0" stroke-width="1.30" opacity="0.8" transform="translate(0.4 2.4)"/>
<path d="M450.0 533.0 L442.0 563.0 L529.0 574.6" stroke-width="2.1"/>
<path d="M450.0 533.0 L442.0 563.0 L529.0 574.6" stroke-width="1.30" opacity="0.8" transform="translate(1 -2.2)"/>
<path d="M545.0 519.0 L538.0 546.8 L529.0 574.6" stroke-width="1.9"/>
<path d="M545.0 519.0 L538.0 546.8 L529.0 574.6" stroke-width="1.18" opacity="0.8" transform="translate(-2 -0.4)"/>
<path d="M546.0 517.8 C548.5 518.6 558.1 518.5 561.0 522.5 C563.9 526.5 564.3 533.8 563.6 542.0 C562.9 550.2 561.0 562.7 556.7 572.0 C552.4 581.3 543.8 593.9 538.0 597.8 C532.2 601.7 523.9 598.9 522.0 595.4 C520.1 591.9 525.8 580.1 526.6 577.0" stroke-width="2.1"/>
<path d="M546.0 517.8 C548.5 518.6 558.1 518.5 561.0 522.5 C563.9 526.5 564.3 533.8 563.6 542.0 C562.9 550.2 561.0 562.7 556.7 572.0 C552.4 581.3 543.8 593.9 538.0 597.8 C532.2 601.7 523.9 598.9 522.0 595.4 C520.1 591.9 525.8 580.1 526.6 577.0" stroke-width="1.30" opacity="0.8" transform="translate(-2 0.6)"/>
<path d="M551 540q-6 4 -2 10M546 562q-6 5 -2 11" stroke-width="1.800"/>
<path d="M522.0 598.0 C520.3 602.5 515.7 616.4 512.0 625.0 C508.3 633.6 505.0 642.3 500.0 649.5 C495.0 656.7 488.8 662.5 482.0 668.0 C475.2 673.5 468.7 678.6 459.0 682.4 C449.3 686.2 429.8 689.6 424.0 691.0" stroke-width="2.1"/>
<path d="M522.0 598.0 C520.3 602.5 515.7 616.4 512.0 625.0 C508.3 633.6 505.0 642.3 500.0 649.5 C495.0 656.7 488.8 662.5 482.0 668.0 C475.2 673.5 468.7 678.6 459.0 682.4 C449.3 686.2 429.8 689.6 424.0 691.0" stroke-width="1.30" opacity="0.8" transform="translate(-1.5 -2)"/>
<path d="M494.0 598.0 C489.3 604.2 475.7 624.7 466.0 635.0 C456.3 645.3 443.7 654.3 436.0 660.0 C428.3 665.7 422.7 667.5 420.0 669.0" stroke-width="1.2" opacity="0.7"/>
<path d="M500.0 649.5 L493.0 642.0"/>
<g stroke-width="1.5">
<ellipse cx="322.5" cy="344.3" rx="35.5" ry="35.5" transform="rotate(0 322.5 344.3)" />
<ellipse cx="322.5" cy="344.3" rx="22" ry="22" transform="rotate(0 322.5 344.3)" stroke-dasharray="3 5" stroke="#ccc"/>
<ellipse cx="267.2" cy="401.6" rx="27" ry="27" transform="rotate(0 267.2 401.6)" />
<ellipse cx="267.2" cy="401.6" rx="18.5" ry="18.5" transform="rotate(0 267.2 401.6)" stroke-width="2.2"/>
<ellipse cx="310.7" cy="455.5" rx="40.5" ry="40.5" transform="rotate(0 310.7 455.5)" />
<ellipse cx="310.7" cy="455.5" rx="27.5" ry="27.5" transform="rotate(0 310.7 455.5)" />
<path d="M267.2 384v35"/>
</g>
<circle cx="322.500" cy="344.300" r="3.500" stroke-width="1.200"/><circle cx="267.200" cy="401.600" r="3" stroke-width="1.200"/><circle cx="310.700" cy="455.500" r="4" stroke-width="1.300"/>
<circle cx="358" cy="345" r="2.300" fill="#fff" stroke="none"/>
<rect x="369.500" y="399.500" width="24" height="19" stroke-width="1.400"/><rect x="374" y="404" width="15" height="10" rx="2" stroke-width="1.300"/>
</g>
<g stroke="#e4e4e4" stroke-width="5.600" stroke-linecap="butt" fill="none">
<path d="M331.2 309.7L333.6 292.9"/>
<path d="M371.9 327.8L381.5 313.8"/>
<path d="M393.2 365.2L408.2 357.2"/>
<path d="M398.7 410.3L415.7 411.1"/>
<path d="M381.5 458.0L394.7 468.8"/>
<path d="M347.0 487.4L352.6 503.4"/>
<path d="M304.2 501.9L301.8 518.7"/>
<path d="M265.9 484.4L256.5 498.6"/>
<path d="M242.7 445.8L227.7 453.8"/>
<path d="M238.5 400.1L221.5 398.9"/>
<path d="M254.9 356.1L241.5 345.5"/>
<path d="M288.8 322.3L283.2 306.3"/>
</g>
<g stroke="#777" stroke-width="2.600" fill="none">
<path d="M331.4 308.2L333.4 294.4"/>
<path d="M372.7 326.6L380.7 315.0"/>
<path d="M394.5 364.5L406.9 357.9"/>
<path d="M400.2 410.3L414.2 411.1"/>
<path d="M382.7 459.0L393.5 467.8"/>
<path d="M347.5 488.8L352.1 502.0"/>
<path d="M304.0 503.4L302.0 517.2"/>
<path d="M265.1 485.7L257.3 497.3"/>
<path d="M241.4 446.5L229.0 453.1"/>
<path d="M237.0 400.0L223.0 399.0"/>
<path d="M253.7 355.1L242.7 346.5"/>
<path d="M288.3 320.9L283.7 307.7"/>
</g>
<path d="M333 395.600Q370 396 408.500 392" stroke="#c47a20" stroke-width="1.100" fill="none"/>
<path d="M318.5 407.6L305.4 392.9L287.6 376.1L273.7 367.0L284.1 379.9L302.6 396.0Z" fill="#bdbdbd" stroke="#fff" stroke-width="1"/>
<path d="M309.0 406.8L335.9 392.5L373.3 369.7L396.7 352.0L370.5 365.3L333.6 388.9Z" fill="#bdbdbd" stroke="#fff" stroke-width="1"/>
<circle cx="314.100" cy="403.600" r="5.500" fill="#cfcfcf" stroke="#fff" stroke-width="1.200"/><circle cx="314.100" cy="403.600" r="2" fill="#555"/>
<circle cx="315" cy="391.500" r="3.200" fill="none" stroke="#eee" stroke-width="1.200"/>
<circle cx="539.800" cy="449.800" r="5.200" fill="#f4f4f4"/>
<defs><linearGradient id="slv" gradientUnits="userSpaceOnUse" x1="734" y1="550" x2="794" y2="572"><stop offset="0" stop-color="#adadad"/><stop offset="0.350" stop-color="#cdcdcd" stop-opacity="0.900"/><stop offset="0.700" stop-color="#e8e8e8" stop-opacity="0.600"/><stop offset="1" stop-color="#fff" stop-opacity="0"/></linearGradient><linearGradient id="skn" gradientUnits="userSpaceOnUse" x1="600" y1="410" x2="680" y2="560"><stop offset="0" stop-color="#e8c9ac"/><stop offset="0.450" stop-color="#deba9b"/><stop offset="1" stop-color="#d3ab8b"/></linearGradient></defs>
<path d="M723 513.600L734 519L734 590L695 569.700L702 548Z" fill="#717171"/>
<path d="M734 519L766.500 533L796 548L804 604L774.600 605L734 590Z" fill="url(#slv)"/>
<path d="M558.5 438.6 C560.0 435.1 568.1 429.7 574.7 424.7 C581.3 419.7 592.6 411.8 598.0 408.5 C603.4 405.2 603.3 405.5 607.0 405.0 C610.7 404.5 615.7 404.9 620.0 405.5 C624.3 406.1 627.5 406.8 632.7 408.5 C637.9 410.2 646.0 412.4 651.0 415.5 C656.0 418.6 659.7 421.6 662.8 427.0 C665.9 432.4 667.0 441.0 669.7 448.0 C672.4 455.0 674.4 461.5 679.0 468.8 C683.6 476.1 690.2 484.7 697.5 492.0 C704.8 499.3 719.9 506.6 723.0 512.8 C726.1 519.0 719.5 520.5 716.0 529.0 C712.5 537.5 705.8 559.1 702.0 563.7 C698.2 568.3 698.4 561.0 693.0 556.8 C687.6 552.6 677.1 544.1 669.7 538.3 C662.4 532.5 655.1 526.6 648.9 522.0 C642.7 517.4 637.7 513.6 632.7 510.5 C627.7 507.4 622.7 504.7 618.8 503.5 C614.9 502.3 613.4 505.4 609.5 503.5 C605.6 501.6 598.9 495.1 595.6 492.0 C592.3 488.9 592.1 488.5 589.8 485.0 C587.5 481.5 585.0 474.5 581.7 471.0 C578.4 467.5 572.9 466.5 570.0 464.0 C567.1 461.5 564.7 458.1 564.3 456.0 C563.9 453.9 567.5 453.1 567.8 451.4 C568.1 449.7 567.5 448.1 566.0 446.0 C564.5 443.9 557.0 442.2 558.5 438.6Z" fill="url(#skn)"/>
<path d="M600.0 452.0 C602.7 450.0 613.3 449.3 620.0 450.0 C626.7 450.7 635.0 452.7 640.0 456.0 C645.0 459.3 650.0 466.7 650.0 470.0 C650.0 473.3 645.3 476.3 640.0 476.0 C634.7 475.7 624.0 470.3 618.0 468.0 C612.0 465.7 607.0 464.7 604.0 462.0 C601.0 459.3 597.3 454.0 600.0 452.0Z" fill="#b98c6c" opacity="0.600"/>
<path d="M586.0 478.0 C587.3 475.5 594.7 472.7 600.0 474.0 C605.3 475.3 612.7 481.7 618.0 486.0 C623.3 490.3 631.7 497.2 632.0 500.0 C632.3 502.8 624.7 503.3 620.0 503.0 C615.3 502.7 608.7 500.3 604.0 498.0 C599.3 495.7 595.0 492.3 592.0 489.0 C589.0 485.7 584.7 480.5 586.0 478.0Z" fill="#c79e7e" opacity="0.700"/>
<path d="M640.0 476.0 C645.3 477.7 651.7 491.0 660.0 500.0 C668.3 509.0 683.0 521.3 690.0 530.0 C697.0 538.7 702.0 548.3 702.0 552.0 C702.0 555.7 697.0 555.7 690.0 552.0 C683.0 548.3 668.3 537.3 660.0 530.0 C651.7 522.7 645.3 514.7 640.0 508.0 C634.7 501.3 628.0 495.3 628.0 490.0 C628.0 484.7 634.7 474.3 640.0 476.0Z" fill="#c09674" opacity="0.350"/>
<path d="M565.0 453.0 C566.0 451.0 569.8 450.0 574.0 450.0 C578.2 450.0 585.7 451.3 590.0 453.0 C594.3 454.7 600.0 457.5 600.0 460.0 C600.0 462.5 594.0 466.7 590.0 468.0 C586.0 469.3 579.7 469.0 576.0 468.0 C572.3 467.0 569.8 464.5 568.0 462.0 C566.2 459.5 564.0 455.0 565.0 453.0Z" fill="#ecd3bd"/>
<path d="M566.0 453.0 C566.7 451.5 570.0 450.5 572.0 451.0 C574.0 451.5 577.7 454.2 578.0 456.0 C578.3 457.8 575.7 461.3 574.0 462.0 C572.3 462.7 569.3 461.5 568.0 460.0 C566.7 458.5 565.3 454.5 566.0 453.0Z" fill="#f3e2d3"/>
<path d="M563 440.200L688 432.800Q693.500 432.800 693.500 437.500Q693.500 442 689 442.600L563 449.600Z" fill="#3a3a3a"/>
<path d="M565 442.500L688 435" stroke="#8c8c8c" stroke-width="1.500" fill="none"/>
<path d="M565 448L688 441" stroke="#222" stroke-width="1.500" fill="none"/>
<path d="M544.600 448.300L563 440.200L563 449.600L548 450.500Z" fill="#b9b9b9"/><path d="M544.600 448.300L552 445L552 450.200Z" fill="#efefef"/>
<path d="M597.500 438.200L603 437.800L603.600 447.200L598 447.600Z" fill="#c2c2c2"/>
<path d="M558.5 438.6 C560.6 435.6 568.1 429.7 574.7 424.7 C581.3 419.7 591.8 409.6 598.0 408.5 C604.2 407.4 611.0 414.4 612.0 418.0 C613.0 421.6 607.7 426.8 604.0 430.0 C600.3 433.2 595.3 435.1 590.0 437.0 C584.7 438.9 576.7 440.6 572.0 441.5 C567.3 442.4 564.2 443.0 562.0 442.5 C559.8 442.0 556.4 441.6 558.5 438.6Z" fill="#e2c0a2"/>
<path d="M574.7 426.5 C578.6 423.8 592.8 413.4 598.0 410.5 C603.2 407.6 604.7 409.2 606.0 409.0" stroke="#efd9c4" stroke-width="2" fill="none" opacity="0.800"/>
</svg>
<div class="a" style="left:884px;top:145px;width:259px;height:256px;background:#535353;border:1px solid #2e2e2e;box-shadow:0 1px 3px rgba(0,0,0,.35)"></div>
<div class="a" style="left:885px;top:146px;width:257px;height:11px;background:#3b3b3b;"></div>
<div class="a" style="left:1129px;top:148px;width:11px;height:7px;background:#555;"></div>
<div class="a" style="left:1131px;top:150px;width:7px;height:1px;background:#ddd;"></div>
<div class="a" style="left:1131px;top:152px;width:7px;height:2px;background:#ccc;"></div>
<div class="a" style="left:1125px;top:148px;width:1px;height:7px;background:#555;"></div>
<div class="a" style="left:885px;top:157px;width:257px;height:19px;background:#404040;"></div>
<div class="a" style="left:885px;top:157px;width:43px;height:19px;background:#555;"></div>
<div class="t" style="left:894.6px;top:161px;font-size:10.5px;line-height:12.5px;letter-spacing:-0.55px;">Podks</div>
<div class="a" style="left:1131px;top:163px;width:7px;height:1px;background:#777;"></div>
<div class="a" style="left:1131px;top:166px;width:7px;height:1px;background:#777;"></div>
<div class="a" style="left:1131px;top:169px;width:7px;height:1px;background:#777;"></div>
<div class="t" style="left:895.8px;top:181px;font-size:10.5px;line-height:12.5px;letter-spacing:-0.42px;">Eloos</div>
<div class="a" style="left:929px;top:178px;width:208px;height:17px;background:#4a4a4a;border:1px solid #404040"></div>
<div class="t" style="left:932px;top:180px;font-size:11.5px;line-height:13.5px;letter-spacing:-0.53px;color:#f0f0f0">Clipping Path</div>
<div class="a" style="left:1130px;top:182px;width:4px;height:2px;background:#ddd;"></div>
<div class="a" style="left:1129px;top:187px;width:6px;height:3px;background:#ddd;"></div>
<div class="a" style="left:891px;top:198px;width:61px;height:14px;background:#474747;"></div>
<div class="t" style="left:893px;top:200px;font-size:9.5px;line-height:11.5px;letter-spacing:-0.71px;color:#383838;-webkit-text-stroke:0.5px #383838">Cinamedl/BiRG</div>
<div class="a" style="left:891px;top:215px;width:246px;height:15px;background:#595959;border:1px solid #444"></div>
<div class="t" style="left:894.6px;top:217px;font-size:10px;line-height:12px;letter-spacing:-0.27px;">Siutes&nbsp; Gilfoe</div>
<div class="a" style="left:891px;top:233px;width:246px;height:15px;background:#4b4b4b;border:1px solid #424242"></div>
<div class="t" style="left:894.6px;top:235px;font-size:10px;line-height:12px;letter-spacing:-0.59px;">Sotlie noelt</div>
<div class="t" style="left:894.6px;top:253px;font-size:10px;line-height:12px;letter-spacing:-0.34px;">Heatie tloodz</div>
<div class="a" style="left:888px;top:266px;width:250px;height:1px;background:#484848;"></div>
<div class="a" style="left:892px;top:270px;width:19px;height:15px;background:#f4f4f4;"></div>
<div class="a" style="left:918px;top:270px;width:62px;height:15px;background:#4a4a4a;border:1px solid #3f3f3f"></div>
<div class="t" style="left:921.8px;top:272px;font-size:10px;line-height:12px;letter-spacing:-1.21px;">Stn</div>
<svg class="a" style="left:1083px;top:270px" width="52" height="14" viewBox="0 0 52 14"><rect x="2.700" y="2.700" width="8" height="8.600" fill="none" stroke="#eee" stroke-width="1.400"/><rect x="4" y="4" width="2.500" height="2.500" fill="#eee"/><rect x="7" y="7.500" width="3" height="2.500" fill="#eee"/><path d="M21 11h8v-2h-2v-4h-2v4h-4z" fill="#ddd"/><rect x="23" y="6" width="2" height="2" fill="#ddd"/><rect x="39" y="2" width="11" height="10" fill="#3c3c3c"/><rect x="41" y="4" width="7" height="2" fill="#ddd"/><rect x="41" y="7" width="2" height="3" fill="#ddd"/><rect x="44" y="7" width="2" height="3" fill="#ddd"/><rect x="47" y="7" width="1" height="3" fill="#ddd"/></svg>
<div class="a" style="left:888px;top:300px;width:250px;height:17px;background:#3f3f3f;"></div>
<div class="t" style="left:894px;top:303px;font-size:10px;line-height:12px;letter-spacing:-0.41px;">Ee.Cipoedies</div>
<div class="a" style="left:888px;top:318px;width:250px;height:20px;background:#6b9bdc;border-top:1px solid #4a6fa8;border-bottom:1px solid #5580bd"></div>
<svg class="a" style="left:893px;top:323px" width="12" height="9" viewBox="0 0 12 9"><path d="M0 2l4 1 2-1 2 1 4-1-3 3-2 0-1 2-1-2-2 0z" fill="#14203a"/></svg>
<div class="t" style="left:909.2px;top:322px;font-size:10px;line-height:12px;letter-spacing:-0.40px;color:#eef3ff">9 Jaidetiqes</div>
<div class="a" style="left:885px;top:377px;width:257px;height:1px;background:#444;"></div>
<svg class="a" style="left:1006px;top:380px" width="120" height="13" viewBox="0 0 120 13"><g fill="#e8e8e8"><rect x="3" y="3" width="9" height="7"/><rect x="23" y="2" width="9" height="9"/><rect x="64" y="2" width="8" height="9"/></g><g fill="#555"><rect x="5" y="5" width="2" height="3"/><rect x="8" y="5" width="2" height="3"/><rect x="26" y="5" width="4" height="3"/><rect x="67" y="4" width="2" height="5"/></g><rect x="44" y="2.700" width="9" height="8" fill="none" stroke="#e8e8e8" stroke-width="1.500"/><path d="M85 4h8v6h-8zM87 2h4v3h-4z" fill="#e8e8e8"/><rect x="87" y="6" width="2" height="2" fill="#555"/><rect x="90" y="6" width="2" height="2" fill="#555"/><circle cx="109" cy="6.500" r="4" fill="none" stroke="#bbb" stroke-width="1"/></svg>
<div class="a" style="left:0px;top:768px;width:1365px;height:11px;background:#fa9a14;"></div>
<div id="banner"></div>
<div id="h1">Retouching Services: Milford</div>
<div id="h2">Professional Editing Studio</div>
</body></html>
